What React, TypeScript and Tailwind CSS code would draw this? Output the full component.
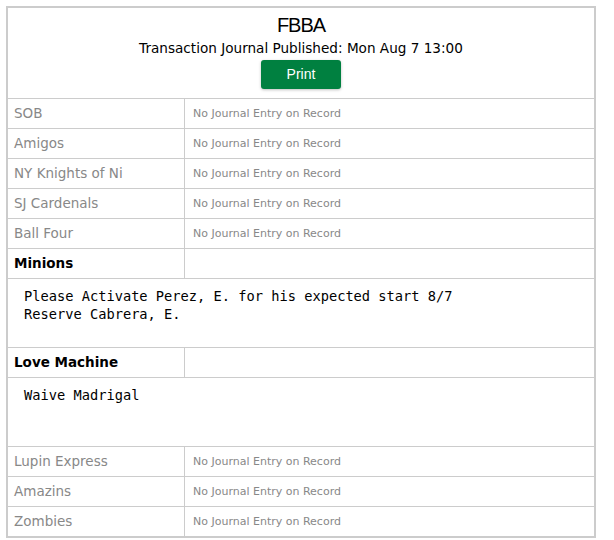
const teamsTop = ["SOB", "Amigos", "NY Knights of Ni", "SJ Cardenals", "Ball Four"];
const teamsBottom = ["Lupin Express", "Amazins", "Zombies"];

const entries = [
  {
    team: "Minions",
    text: "Please Activate Perez, E. for his expected start 8/7\nReserve Cabrera, E.",
  },
  { team: "Love Machine", text: "Waive Madrigal" },
];

function EmptyRow({ name, last }: { name: string; last?: boolean }) {
  return (
    <div className={`grid grid-cols-[177px_1fr] ${last ? "h-[29px]" : "h-[30px] border-b border-[#ccc]"}`}>
      <div className="border-r border-[#ccc] flex items-center pl-[6px] text-[13.5px] text-[#888] font-['DejaVu_Sans',sans-serif]">
        {name}
      </div>
      <div className="flex items-center pl-[8px] pt-[1px] text-[11px] text-[#888] font-['DejaVu_Sans',sans-serif]">
        No Journal Entry on Record
      </div>
    </div>
  );
}

function EntryRow({ team, text }: { team: string; text: string }) {
  return (
    <>
      <div className="grid grid-cols-[177px_1fr] h-[30px] border-b border-[#ccc]">
        <div className="border-r border-[#ccc] flex items-center pl-[6px] text-[13.5px] font-bold text-black font-['DejaVu_Sans',sans-serif]">
          {team}
        </div>
        <div />
      </div>
      <div className="h-[69px] border-b border-[#ccc] pl-[16px] pt-[8px]">
        <pre className="text-[13.7px] leading-[18px] text-black font-['DejaVu_Sans_Mono',monospace]">{text}</pre>
      </div>
    </>
  );
}

export default function App() {
  return (
    <div className="bg-white w-[614px] h-[540px] p-[6px]">
      <div className="w-[590px] h-[532px] border-2 border-[#ccc]">
        <div className="h-[91px] border-b border-[#ccc] flex flex-col items-center pt-[5px]">
          <div className="text-[20px] leading-[24px] tracking-[-1px] text-black font-['Liberation_Sans',sans-serif]">FBBA</div>
          <div className="text-[13.6px] leading-[18px] mt-[2px] text-black font-['DejaVu_Sans',sans-serif]">
            Transaction Journal Published: Mon Aug 7 13:00
          </div>
          <button className="mt-[3px] w-[80px] h-[29px] rounded-[3px] bg-[#008040] text-white text-[14px] font-['Liberation_Sans',sans-serif] shadow-[0_1px_3px_rgba(0,0,0,0.25)]">
            Print
          </button>
        </div>
        {teamsTop.map((t) => (
          <EmptyRow key={t} name={t} />
        ))}
        {entries.map((e) => (
          <EntryRow key={e.team} team={e.team} text={e.text} />
        ))}
        {teamsBottom.map((t, i) => (
          <EmptyRow key={t} name={t} last={i === teamsBottom.length - 1} />
        ))}
      </div>
    </div>
  );
}
